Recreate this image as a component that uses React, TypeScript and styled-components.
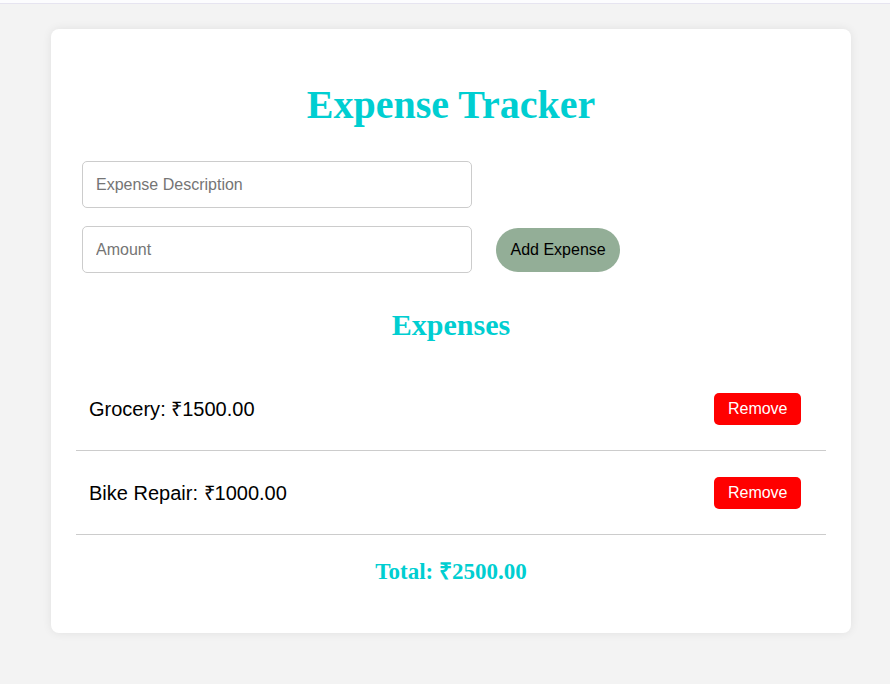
import React, { useState } from 'react'
import styled, { createGlobalStyle } from 'styled-components'

const GlobalStyle = createGlobalStyle`
    html, body {
        margin: 0;
        padding: 0;
        background: #f3f3f3;
        font-family: 'Liberation Sans', Arial, sans-serif;
    }
`

const TopStrip = styled.div`
    height: 3px;
    background: #fcfcfe;
    border-bottom: 1px solid #e6e4f0;
`

const Page = styled.div`
    padding: 25px 0 50px 51px;
`

const Card = styled.div`
    box-sizing: border-box;
    width: 800px;
    height: 604px;
    background: #fff;
    border-radius: 8px;
    box-shadow: 0 0 10px rgba(0, 0, 0, 0.08);
    padding: 0 25px;
    display: flex;
    flex-direction: column;
`

const Title = styled.h1`
    margin: 53px 0 0;
    text-align: center;
    font-family: 'Liberation Serif', 'Times New Roman', serif;
    font-size: 40px;
    line-height: 46px;
    font-weight: bold;
    color: #00ced1;
`

const Form = styled.div`
    display: flex;
    flex-direction: column;
    gap: 18px;
    margin-top: 33px;
    padding-left: 6px;
`

const FormRow = styled.div`
    display: flex;
    align-items: center;
    gap: 24px;
`

const Input = styled.input`
    box-sizing: border-box;
    width: 390px;
    height: 47px;
    padding: 0 13px;
    border: 1px solid #cccccc;
    border-radius: 5px;
    font-family: 'Liberation Sans', Arial, sans-serif;
    font-size: 16px;
    color: #222;
    outline: none;

    &::placeholder {
        color: #757575;
    }
`

const AddButton = styled.button`
    height: 44px;
    padding: 0 14.5px;
    border: none;
    border-radius: 22px;
    background: #93ae97;
    color: #000;
    font-family: 'Liberation Sans', Arial, sans-serif;
    font-size: 16px;
    cursor: pointer;
`

const SubTitle = styled.h2`
    margin: 34px 0 0;
    text-align: center;
    font-family: 'Liberation Serif', 'Times New Roman', serif;
    font-size: 30px;
    line-height: 35px;
    font-weight: bold;
    color: #00ced1;
`

const List = styled.ul`
    list-style: none;
    margin: 25px 0 0;
    padding: 0;
`

const Item = styled.li`
    display: flex;
    align-items: center;
    justify-content: space-between;
    height: 83px;
    padding: 0 25px 0 13px;
    border-bottom: 1px solid #cccccc;
    font-size: 20px;
    color: #000;
`

const RemoveButton = styled.button`
    height: 32px;
    padding: 0 13.5px;
    border: none;
    border-radius: 5px;
    background: #ff0000;
    color: #fff;
    font-family: 'Liberation Sans', Arial, sans-serif;
    font-size: 16px;
    cursor: pointer;
`

const Total = styled.h3`
    margin: 24px 0 0;
    text-align: center;
    font-family: 'Liberation Serif', 'Times New Roman', serif;
    font-size: 23px;
    line-height: 26px;
    font-weight: bold;
    color: #00ced1;
`

type Expense = { id: number; description: string; amount: number }

export default function App() {
    const [expenses, setExpenses] = useState<Expense[]>([
        { id: 1, description: 'Grocery', amount: 1500 },
        { id: 2, description: 'Bike Repair', amount: 1000 }
    ])
    const [description, setDescription] = useState('')
    const [amount, setAmount] = useState('')

    const addExpense = () => {
        const value = parseFloat(amount)
        if (!description || isNaN(value)) return
        setExpenses([...expenses, { id: Date.now(), description, amount: value }])
        setDescription('')
        setAmount('')
    }

    const total = expenses.reduce((sum, e) => sum + e.amount, 0)

    return (
        <>
            <GlobalStyle />
            <TopStrip />
            <Page>
                <Card>
                    <Title>Expense Tracker</Title>
                    <Form>
                        <FormRow>
                            <Input
                                placeholder="Expense Description"
                                value={description}
                                onChange={e => setDescription(e.target.value)}
                            />
                        </FormRow>
                        <FormRow>
                            <Input
                                type="number"
                                placeholder="Amount"
                                value={amount}
                                onChange={e => setAmount(e.target.value)}
                            />
                            <AddButton onClick={addExpense}>Add Expense</AddButton>
                        </FormRow>
                    </Form>
                    <SubTitle>Expenses</SubTitle>
                    <List>
                        {expenses.map(e => (
                            <Item key={e.id}>
                                <span>
                                    {e.description}: ₹{e.amount.toFixed(2)}
                                </span>
                                <RemoveButton onClick={() => setExpenses(expenses.filter(x => x.id !== e.id))}>
                                    Remove
                                </RemoveButton>
                            </Item>
                        ))}
                    </List>
                    <Total>Total: ₹{total.toFixed(2)}</Total>
                </Card>
            </Page>
        </>
    )
}
